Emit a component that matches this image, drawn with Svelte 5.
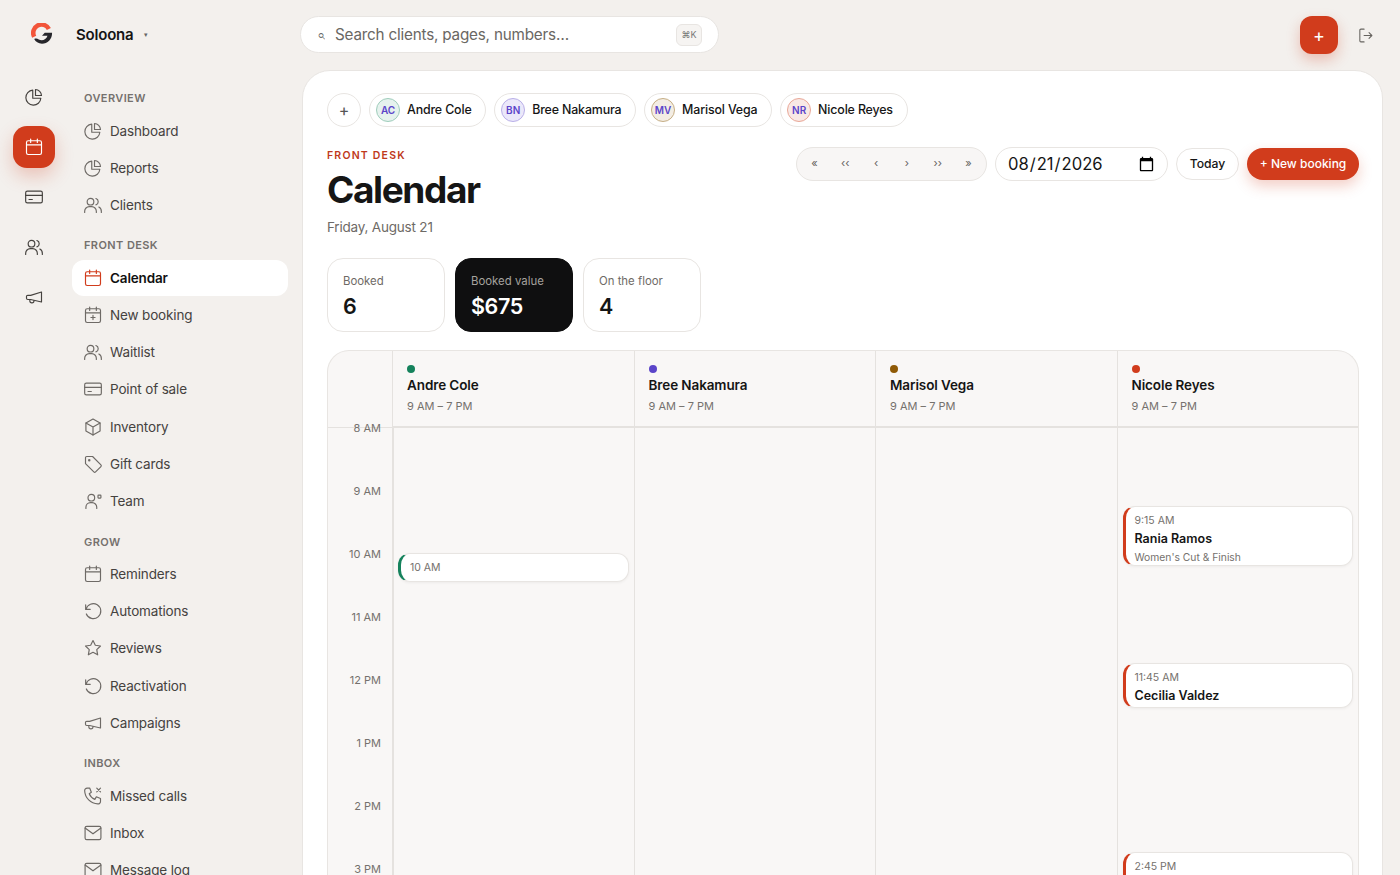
<script>
	const sections = [
		{ title: 'OVERVIEW', items: [['Dashboard', 'pie'], ['Reports', 'pie'], ['Clients', 'users']] },
		{
			title: 'FRONT DESK',
			items: [
				['Calendar', 'cal'],
				['New booking', 'calplus'],
				['Waitlist', 'users'],
				['Point of sale', 'card'],
				['Inventory', 'box'],
				['Gift cards', 'tag'],
				['Team', 'team']
			]
		},
		{
			title: 'GROW',
			items: [['Reminders', 'cal'], ['Automations', 'undo'], ['Reviews', 'star'], ['Reactivation', 'undo'], ['Campaigns', 'mega']]
		},
		{ title: 'INBOX', items: [['Missed calls', 'phone'], ['Inbox', 'mail'], ['Message log', 'mail']] }
	];
	const rail = ['pie', 'cal', 'card', 'users', 'mega'];
	const staff = [
		{ initials: 'AC', name: 'Andre Cole', color: '#15825c', tint: '#e6f2ee', ring: '#9fcdbb' },
		{ initials: 'BN', name: 'Bree Nakamura', color: '#5b45c9', tint: '#ebe8fa', ring: '#b9afe8' },
		{ initials: 'MV', name: 'Marisol Vega', color: '#8f5a06', tint: '#f3ede4', ring: '#c6ae84' },
		{ initials: 'NR', name: 'Nicole Reyes', color: '#d13c1c', tint: '#f9e9e5', ring: '#e9a797' }
	];
	const hours = ['8 AM', '9 AM', '10 AM', '11 AM', '12 PM', '1 PM', '2 PM', '3 PM'];
	const hourPx = 63;
	const events = [
		[{ at: 2, h: 29, time: '10 AM' }],
		[],
		[],
		[
			{ at: 1.25, h: 60, time: '9:15 AM', who: 'Rania Ramos', what: "Women's Cut & Finish" },
			{ at: 3.75, h: 45, time: '11:45 AM', who: 'Cecilia Valdez' },
			{ at: 6.75, h: 60, time: '2:45 PM' }
		]
	];
	const pager = ['«', '‹‹', '‹', '›', '››', '»'];
</script>

{#snippet icon(name)}
	<svg viewBox="0 0 24 24" fill="none" stroke="currentColor" stroke-width="1.4" stroke-linecap="round" stroke-linejoin="round">
		{#if name === 'pie'}
			<path d="M10.500 3.800a9 9 0 1 0 9.700 9.700h-9.700z" /><path d="M13.800 3a7.500 7.500 0 0 1 7.200 7.200h-7.200z" />
		{:else if name === 'cal'}
			<rect x="3" y="4.500" width="18" height="16.500" rx="2" /><path d="M3 9.500h18M8 2.500v4M16 2.500v4" />
		{:else if name === 'calplus'}
			<rect x="3" y="4.500" width="18" height="16.500" rx="2" /><path d="M3 9.500h18M8 2.500v4M16 2.500v4M12 12.500v5M9.500 15h5" />
		{:else if name === 'users'}
			<circle cx="9" cy="8" r="4" /><path d="M2 21v-1.500A5.500 5.500 0 0 1 7.500 14h3a5.500 5.500 0 0 1 5.500 5.500V21" /><path d="M15.500 4.200a4 4 0 0 1 0 7.600M19 14.500a5.500 5.500 0 0 1 3 5V21" />
		{:else if name === 'card'}
			<rect x="2" y="5" width="20" height="14" rx="2" /><path d="M2 10h20M6 15h4" />
		{:else if name === 'box'}
			<path d="M12 2.500l8.500 4.800v9.400L12 21.500l-8.500-4.800V7.300z" /><path d="M3.500 7.300L12 12l8.500-4.700M12 12v9.500" />
		{:else if name === 'tag'}
			<path d="M3 4.500A1.500 1.500 0 0 1 4.500 3h7L21.500 13a1.500 1.500 0 0 1 0 2.100l-6.400 6.400a1.500 1.500 0 0 1-2.100 0L3 11.500z" /><circle cx="7.500" cy="7.500" r=".8" />
		{:else if name === 'team'}
			<circle cx="10" cy="8" r="4" /><path d="M3.500 21v-1.500A5.500 5.500 0 0 1 9 14h2a5.500 5.500 0 0 1 5.500 5.500V21" /><rect x="18" y="5" width="3.500" height="3.500" rx=".6" />
		{:else if name === 'undo'}
			<path d="M3.200 4.500v5.500h5.500" /><path d="M3.600 10A9 9 0 1 1 4 15.500" />
		{:else if name === 'star'}
			<path d="M12 3l2.800 5.700 6.200.9-4.500 4.400 1.100 6.200-5.600-3-5.600 3 1.100-6.200L3 9.600l6.200-.9z" />
		{:else if name === 'mega'}
			<path d="M21 6v12L8 15H4.500A1.500 1.500 0 0 1 3 13.500v-2A1.500 1.500 0 0 1 4.500 10H8z" /><path d="M7 15.300v1.200a2.500 2.500 0 0 0 5 0v-.2" />
		{:else if name === 'phone'}
			<path d="M5 2.500h3l2 5-2.500 1.800a12 12 0 0 0 6.700 6.700L16 13l5 2v3.500a3 3 0 0 1-3.200 3A16.500 16.500 0 0 1 2 5.700a3 3 0 0 1 3-3.200z" /><path d="M16.500 2.500l4.500 4.500M21 2.500L16.500 7" />
		{:else if name === 'mail'}
			<rect x="2.500" y="4" width="19" height="16" rx="2" /><path d="M2.500 6l9.500 7 9.500-7" />
		{/if}
	</svg>
{/snippet}

<div class="page">
	<header class="top">
		<div class="brand">
			<svg class="logo" viewBox="0 0 24 24" fill="none">
				<path d="M19.500 6.500A9 9 0 0 0 3.500 15" stroke="#f2553a" stroke-width="5" stroke-linecap="butt" />
				<path d="M3.500 17.500c2-1 3.500-.5 5 .5 3.500 2 8 .5 9.500-4H12l3-3.500h8c.2 7-5 12-11 12-4 0-7-2-8.500-5z" fill="#26262b" />
			</svg>
			<b>Soloona</b>
			<span class="caret">▾</span>
		</div>
		<div class="search">
			<span class="glass">⌕</span>
			<span class="ph">Search clients, pages, numbers…</span>
			<kbd>⌘K</kbd>
		</div>
		<div class="top-right">
			<button class="fab">+</button>
			<svg class="logout" viewBox="0 0 24 24" fill="none" stroke="currentColor" stroke-width="1.5" stroke-linecap="round" stroke-linejoin="round">
				<path d="M10 3H5.500A1.500 1.500 0 0 0 4 4.500v15A1.500 1.500 0 0 0 5.500 21H10M10 12h11M17 8l4 4-4 4" />
			</svg>
		</div>
	</header>

	<div class="body">
		<nav class="rail">
			{#each rail as r, i}
				<button class="rail-btn" class:on={i === 1}>{@render icon(r)}</button>
			{/each}
		</nav>

		<aside class="side">
			{#each sections as s}
				<div class="sec">
					<h4>{s.title}</h4>
					{#each s.items as [label, ic]}
						<a class="item" class:active={label === 'Calendar'} href="#top">{@render icon(ic)}<span>{label}</span></a>
					{/each}
				</div>
			{/each}
		</aside>

		<main class="card">
			<div class="chips">
				<button class="add">+</button>
				{#each staff as p}
					<div class="chip">
						<span class="avatar" style={`background:${p.tint};border-color:${p.ring}`}>{p.initials}</span>
						{p.name}
					</div>
				{/each}
			</div>

			<div class="head">
				<div>
					<div class="eyebrow">FRONT DESK</div>
					<h1>Calendar</h1>
					<div class="date">Friday, August 21</div>
				</div>
				<div class="tools">
					<div class="pager">
						{#each pager as g}<button>{g}</button>{/each}
					</div>
					<input class="dp" type="date" value="2026-08-21" />
					<button class="today">Today</button>
					<button class="new">+ New booking</button>
				</div>
			</div>

			<div class="stats">
				<div class="stat"><span>Booked</span><b>6</b></div>
				<div class="stat dark"><span>Booked value</span><b>$675</b></div>
				<div class="stat"><span>On the floor</span><b>4</b></div>
			</div>

			<div class="grid">
				<div class="corner"></div>
				{#each staff as p}
					<div class="col-head">
						<i style={`background:${p.color}`}></i>
						<b>{p.name}</b>
						<span>9 AM – 7 PM</span>
					</div>
				{/each}
				<div class="times">
					{#each hours as h}<div class="t">{h}</div>{/each}
				</div>
				{#each staff as p, c}
					<div class="col">
						{#each events[c] as e}
							<div class="ev" style={`top:${e.at * hourPx}px;height:${e.h}px;--c:${p.color}`}>
								<div class="ev-t">{e.time}</div>
								{#if e.who}<div class="ev-n">{e.who}</div>{/if}
								{#if e.what}<div class="ev-s">{e.what}</div>{/if}
							</div>
						{/each}
					</div>
				{/each}
			</div>
		</main>
	</div>
</div>

<style>
	:global(body) {
		margin: 0;
		background: #f3f0ed;
		font-family: Inter, 'Liberation Sans', sans-serif;
		color: #151515;
	}
	button {
		font-family: inherit;
		cursor: pointer;
	}
	.page {
		height: 875px;
		overflow: hidden;
	}
	.top {
		height: 70px;
		display: flex;
		align-items: center;
	}
	.brand {
		width: 300px;
		display: flex;
		align-items: center;
		padding-left: 31px;
		margin-top: -2px;
		box-sizing: border-box;
	}
	.logo {
		width: 22px;
		height: 22px;
		margin-right: 23px;
	}
	.brand b {
		font-size: 15px;
		font-weight: 600;
		letter-spacing: -0.2px;
	}
	.caret {
		font-size: 7px;
		color: #666;
		margin-left: 11px;
	}
	.search {
		width: 419px;
		height: 37px;
		margin-top: -1px;
		box-sizing: border-box;
		background: #fff;
		border: 1px solid #e8e5e2;
		border-radius: 19px;
		display: flex;
		align-items: center;
		padding: 0 16px;
		color: #666;
	}
	.glass {
		font-size: 14px;
		width: 18px;
		transform: scaleX(-1);
		text-align: right;
	}
	.ph {
		flex: 1;
		font-size: 15.250px;
		color: #6a6763;
		letter-spacing: -0.2px;
	}
	kbd {
		font-family: inherit;
		font-size: 9px;
		width: 24px;
		height: 20px;
		display: grid;
		place-items: center;
		background: #f6f4f2;
		border: 1px solid #e8e5e2;
		border-radius: 6px;
		color: #777;
	}
	.top-right {
		margin-left: auto;
		display: flex;
		align-items: center;
		gap: 19px;
		padding-right: 26px;
	}
	.fab {
		width: 38px;
		height: 38px;
		border: 0;
		border-radius: 12px;
		background: #d13c1c;
		color: #fff;
		font-size: 18px;
		box-shadow: 0 6px 14px rgba(209, 60, 28, 0.28);
	}
	.logout {
		width: 17px;
		height: 17px;
		color: #66635f;
	}

	.body {
		display: flex;
		height: 805px;
	}
	.rail {
		width: 68px;
		flex: none;
		display: flex;
		flex-direction: column;
		align-items: center;
		gap: 8px;
		padding-top: 6px;
	}
	.rail-btn {
		width: 42px;
		height: 42px;
		border: 0;
		border-radius: 14px;
		background: transparent;
		color: #45423f;
		display: grid;
		place-items: center;
		padding: 0;
	}
	.rail-btn svg {
		width: 20px;
		height: 20px;
	}
	.rail-btn.on {
		background: #d13c1c;
		color: #fff;
		box-shadow: 0 8px 18px rgba(209, 60, 28, 0.25);
	}
	.side {
		width: 216px;
		flex: none;
		margin-left: 4px;
		padding-top: 20px;
	}
	.sec {
		margin-bottom: 14px;
	}
	.sec h4 {
		margin: 0 0 7px 12px;
		font-size: 11px;
		line-height: 16px;
		font-weight: 600;
		letter-spacing: 0.4px;
		color: #75716d;
	}
	.item {
		display: flex;
		align-items: center;
		gap: 7px;
		height: 36px;
		box-sizing: border-box;
		margin-bottom: 1.200px;
		padding: 0 0 1px 11px;
		border-radius: 12px;
		color: #45423f;
		text-decoration: none;
		font-size: 13.500px;
		letter-spacing: -0.15px;
	}
	.item svg {
		width: 20px;
		height: 20px;
		flex: none;
		color: #6e6a66;
	}
	.item.active {
		background: #fff;
		color: #111;
		font-weight: 600;
	}
	.item.active svg {
		color: #d13c1c;
	}

	.card {
		width: 1081px;
		margin-left: 14px;
		height: 840px;
		box-sizing: border-box;
		background: #fff;
		border: 1px solid #e8e5e2;
		border-radius: 28px;
		padding: 22px 23px 0 24px;
	}
	.chips {
		display: flex;
		gap: 8px;
	}
	.add {
		width: 34px;
		height: 34px;
		border: 1px solid #e8e5e2;
		border-radius: 50%;
		background: #fff;
		color: #555;
		font-size: 16px;
		padding: 0;
	}
	.chip {
		height: 34px;
		box-sizing: border-box;
		border: 1px solid #e8e5e2;
		border-radius: 17px;
		display: flex;
		align-items: center;
		gap: 7px;
		padding: 0 13.700px 1px 6px;
		font-size: 12.400px;
		font-weight: 500;
		letter-spacing: -0.15px;
	}
	.avatar {
		width: 24px;
		height: 24px;
		box-sizing: border-box;
		border: 1px solid;
		border-radius: 50%;
		display: grid;
		place-items: center;
		font-size: 10px;
		font-weight: 600;
		color: #5b45c9;
		letter-spacing: 0;
	}
	.head {
		display: flex;
		justify-content: space-between;
		margin-top: 20px;
	}
	.eyebrow {
		margin-top: 1px;
		font-size: 10.500px;
		line-height: 16px;
		font-weight: 600;
		letter-spacing: 1.200px;
		color: #c0391b;
	}
	h1 {
		margin: 5px 0 6px;
		font-size: 37px;
		line-height: 42px;
		font-weight: 700;
		letter-spacing: -1.400px;
		color: #151515;
	}
	.date {
		font-size: 13.500px;
		letter-spacing: -0.2px;
		line-height: 20px;
		color: #6e6a66;
	}
	.tools {
		display: flex;
		align-items: center;
		gap: 8px;
		height: 34px;
	}
	.pager {
		width: 191px;
		height: 34px;
		box-sizing: border-box;
		background: #f8f6f5;
		border: 1px solid #e8e5e2;
		border-radius: 17px;
		display: grid;
		grid-template-columns: repeat(6, 1fr);
		padding: 0 2px;
	}
	.pager button {
		border: 0;
		background: none;
		padding: 0 0 2px;
		font-size: 11px;
		color: #66635f;
	}
	.dp {
		width: 173px;
		height: 34px;
		box-sizing: border-box;
		border: 1px solid #e8e5e2;
		border-radius: 17px;
		background: #fff;
		padding: 0 10px 0 11px;
		font-family: inherit;
		font-size: 16.600px;
		color: #151515;
	}
	.today {
		height: 32px;
		width: 63px;
		border: 1px solid #e8e5e2;
		border-radius: 16px;
		background: #fff;
		font-size: 12.200px;
		font-weight: 500;
		color: #151515;
		padding: 0 0 1px;
	}
	.new {
		height: 32px;
		width: 112px;
		border: 0;
		border-radius: 16px;
		background: #d13c1c;
		color: #fff;
		font-size: 12px;
		font-weight: 500;
		padding: 0 0 1px;
		box-shadow: 0 6px 14px rgba(209, 60, 28, 0.25);
	}
	.stats {
		display: flex;
		gap: 10px;
		margin-top: 21px;
	}
	.stat {
		width: 118px;
		height: 74px;
		box-sizing: border-box;
		border: 1px solid #e8e5e2;
		border-radius: 16px;
		padding: 14px 15px 0;
		display: flex;
		flex-direction: column;
		gap: 4px;
	}
	.stat span {
		font-size: 11.400px;
		line-height: 16px;
		color: #6e6a66;
	}
	.stat b {
		font-size: 21.500px;
		letter-spacing: -0.4px;
		line-height: 26px;
		font-weight: 600;
	}
	.stat.dark {
		background: #0f0f10;
		border-color: #0f0f10;
		color: #fff;
	}
	.stat.dark span {
		color: #a5a29e;
	}
	.grid {
		margin-top: 18px;
		width: 1032px;
		box-sizing: border-box;
		border: 1px solid #e8e5e2;
		border-bottom: 0;
		border-radius: 22px 22px 0 0;
		background: #f9f7f6;
		overflow: hidden;
		display: grid;
		grid-template-columns: 64px repeat(4, 1fr);
		grid-template-rows: 77px 600px;
	}
	.corner {
		border-bottom: 1px solid #e5e2df;
	}
	.col-head {
		border-left: 1px solid #e5e2df;
		border-bottom: 2px solid #e5e2df;
		padding: 14px 14px 0;
		display: flex;
		flex-direction: column;
	}
	.col-head i {
		width: 8px;
		height: 8px;
		border-radius: 50%;
		margin-bottom: 3px;
	}
	.col-head b {
		font-size: 13.500px;
		line-height: 18px;
		font-weight: 600;
		letter-spacing: -0.1px;
	}
	.col-head span {
		margin-top: 4px;
		font-size: 11px;
		line-height: 16px;
		color: #75716d;
	}
	.times {
		position: relative;
		margin-top: -7px;
	}
	.t {
		height: 63px;
		box-sizing: border-box;
		padding-right: 11px;
		text-align: right;
		font-size: 11px;
		line-height: 14px;
		color: #75716d;
	}
	.col {
		position: relative;
		border-left: 1px solid #e5e2df;
	}
	.times + .col {
		border-left-width: 2px;
	}
	.times + .col .ev {
		left: 4px;
	}
	.ev {
		position: absolute;
		left: 5px;
		right: 5px;
		margin-top: -1px;
		box-sizing: border-box;
		overflow: hidden;
		background: #fff;
		border: 1px solid #e8e5e2;
		border-left: 3px solid var(--c);
		border-radius: 12px;
		padding: 7px 9px 0;
		box-shadow: 0 1px 3px rgba(0, 0, 0, 0.05);
	}
	.ev-t {
		font-size: 10.500px;
		line-height: 14px;
		color: #75716d;
	}
	.ev-n {
		margin-top: 2px;
		font-size: 12.500px;
		line-height: 17px;
		font-weight: 600;
	}
	.ev-s {
		margin-top: 3px;
		font-size: 10.300px;
		line-height: 14px;
		color: #75716d;
	}
</style>
